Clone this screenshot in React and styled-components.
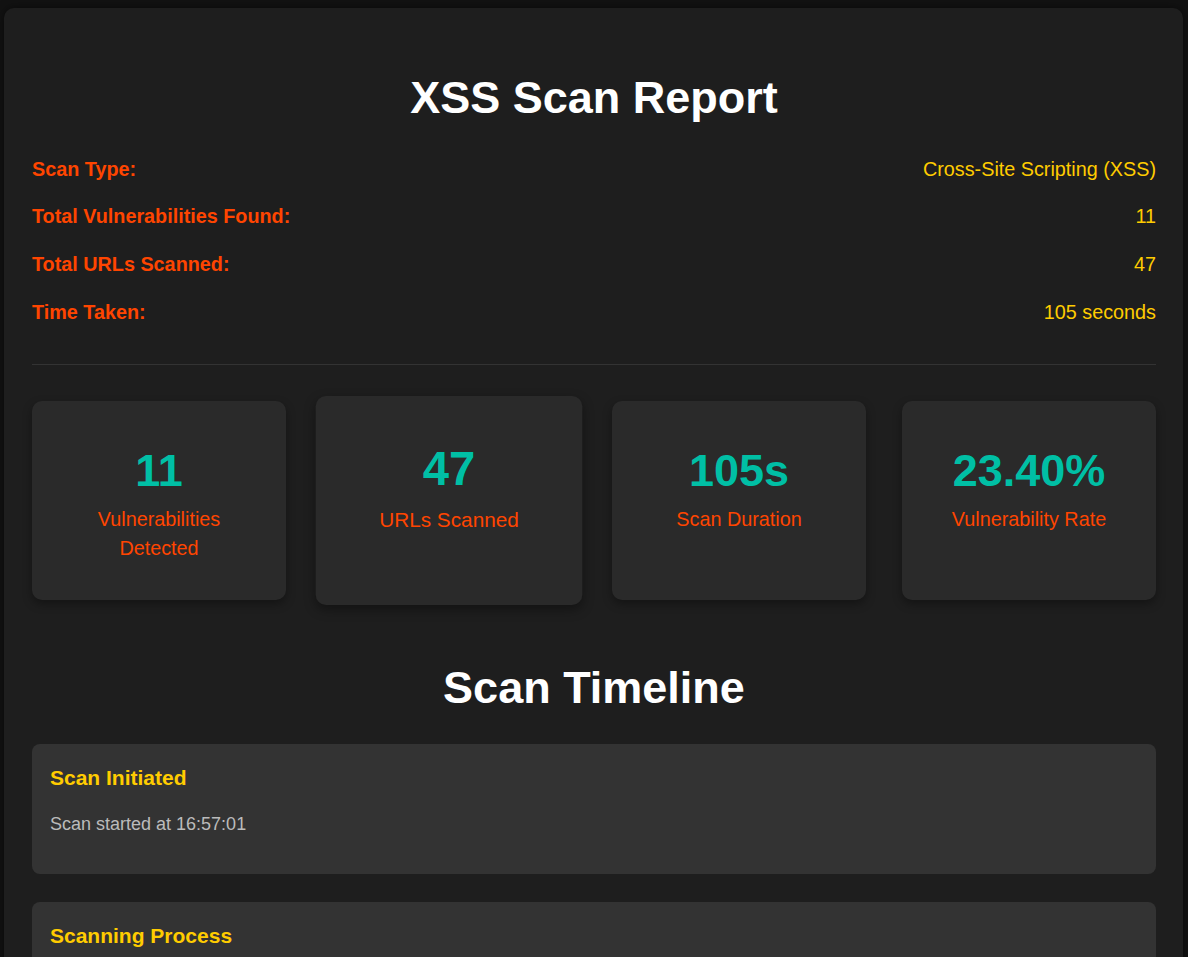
import React from "react";
import styled, { createGlobalStyle } from "styled-components";

const GlobalStyle = createGlobalStyle`
  html, body {
    margin: 0;
    background: #121212;
  }
  body {
    padding: 8px 5px 0 4px;
    font-family: "Liberation Sans", Arial, sans-serif;
    font-size: 18px;
    line-height: 1.5;
    color: #e0e0e0;
  }
`;

const Container = styled.div`
  background: #1e1e1e;
  border-radius: 10px;
  padding: 28px 27px 40px 28px;
  box-shadow: 0 0 10px rgba(0, 0, 0, 0.5);
`;

const Title = styled.h1`
  font-size: 45px;
  font-weight: bold;
  color: #fff;
  text-align: center;
  margin: ${(p) => p.$margin || "28px 0 14px"};
`;

const Info = styled.div`
  padding-bottom: 28px;
  border-bottom: 1px solid #333;
`;

const InfoRow = styled.div`
  display: flex;
  justify-content: space-between;
  align-items: center;
  padding: 9px 0;
  font-size: 19.8px;
`;

const Label = styled.span`
  font-weight: bold;
  color: #ff4500;
`;

const Value = styled.span`
  color: #ffcc00;
`;

const StatGrid = styled.div`
  display: grid;
  grid-template-columns: repeat(4, 1fr);
  gap: 36px;
  margin-top: 36px;
`;

const StatCard = styled.div`
  background: #2a2a2a;
  border-radius: 10px;
  padding: 36px;
  text-align: center;
  box-shadow: 0 4px 10px rgba(0, 0, 0, 0.35);
  transform: ${(p) => (p.$raised ? "scale(1.05)" : "none")};
`;

const StatNumber = styled.div`
  font-size: 45px;
  font-weight: bold;
  color: #00bfa5;
`;

const StatLabel = styled.div`
  font-size: 19.8px;
  color: #ff4500;
`;

const Timeline = styled.div`
  display: flex;
  flex-direction: column;
  gap: 28px;
`;

const Event = styled.div`
  background: #333;
  border-radius: 8px;
  padding: 18px;
`;

const EventTitle = styled.h3`
  font-size: 21px;
  font-weight: bold;
  color: #ffcc00;
  margin: 0 0 18px;
`;

const EventText = styled.p`
  color: #bbb;
  margin: 0 0 18px;
`;

const info = [
  ["Scan Type:", "Cross-Site Scripting (XSS)"],
  ["Total Vulnerabilities Found:", "11"],
  ["Total URLs Scanned:", "47"],
  ["Time Taken:", "105 seconds"],
];

const stats = [
  { value: "11", label: "Vulnerabilities Detected" },
  { value: "47", label: "URLs Scanned", raised: true },
  { value: "105s", label: "Scan Duration" },
  { value: "23.40%", label: "Vulnerability Rate" },
];

const events = [
  { title: "Scan Initiated", text: "Scan started at 16:57:01" },
  { title: "Scanning Process", text: "Scanned 47 URLs for XSS vulnerabilities" },
  { title: "Scan Completed", text: "Scan finished at 16:58:46" },
];

export default function App() {
  return (
    <>
      <GlobalStyle />
      <Container>
        <Title>XSS Scan Report</Title>
        <Info>
          {info.map(([label, value]) => (
            <InfoRow key={label}>
              <Label>{label}</Label>
              <Value>{value}</Value>
            </InfoRow>
          ))}
        </Info>
        <StatGrid>
          {stats.map((s) => (
            <StatCard key={s.label} $raised={s.raised}>
              <StatNumber>{s.value}</StatNumber>
              <StatLabel>{s.label}</StatLabel>
            </StatCard>
          ))}
        </StatGrid>
        <Title $margin="54px 0 22px">Scan Timeline</Title>
        <Timeline>
          {events.map((e) => (
            <Event key={e.title}>
              <EventTitle>{e.title}</EventTitle>
              <EventText>{e.text}</EventText>
            </Event>
          ))}
        </Timeline>
      </Container>
    </>
  );
}
